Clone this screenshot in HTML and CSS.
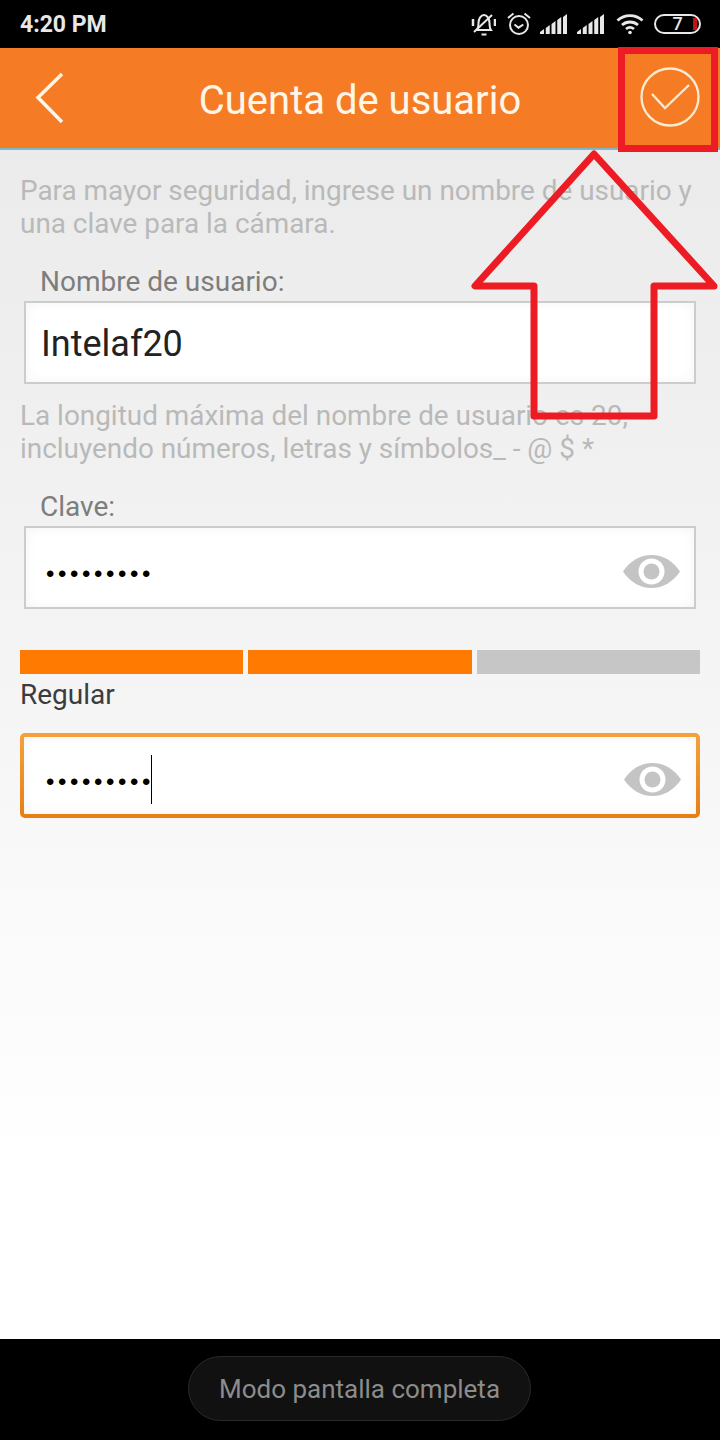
FILE: index.html
```html
<!DOCTYPE html>
<html lang="es">
<head>
    <meta charset="UTF-8">
    <meta name="viewport" content="width=device-width, initial-scale=1.0">
    <title>Cuenta de usuario</title>
    <link rel="stylesheet" href="styles.css">
</head>
<body>
    <div class="status-bar">
        <span class="clock">4:20 PM</span>
        <div class="status-icons">
            <!-- muted bell -->
            <svg class="ic-bell" width="26" height="24" viewBox="0 0 26 24" fill="none" stroke="#e8e8e8" stroke-width="2">
                <path d="M7 18c1.5-2 1.5-4 1.500-7 0-4.500 2.500-8 5.500-8s5.500 3.500 5.500 8c0 3 0 5 1.500 7z"/>
                <path d="M11.500 22.500h5"/>
                <path d="M22 3 4 20"/>
                <path d="M3 7v7M25 7v7" stroke-width="2.500"/>
            </svg>
            <!-- alarm -->
            <svg class="ic-alarm" width="24" height="24" viewBox="0 0 24 24" fill="none" stroke="#e8e8e8" stroke-width="2">
                <circle cx="12" cy="13" r="9"/>
                <path d="M7.500 12.500l4 3.200 4.800-3.200"/>
                <path d="M1 6l5.500-4.500M23 6l-5.500-4.500"/>
            </svg>
            <!-- signal -->
            <svg class="ic-signal" width="27" height="20" viewBox="0 0 27 20" fill="#e8e8e8">
                <path d="M0 20v-2l4-3v5zM5.750 20v-6l4-3v9zM11.500 20V10l4-3v13zM17.250 20V6l4-3v17zM23 20V3l4-3v20z"/>
            </svg>
            <svg class="ic-signal ic-signal-last" width="27" height="20" viewBox="0 0 27 20" fill="#e8e8e8">
                <path d="M0 20v-2l4-3v5zM5.750 20v-6l4-3v9zM11.500 20V10l4-3v13zM17.250 20V6l4-3v17zM23 20V3l4-3v20z"/>
            </svg>
            <!-- wifi -->
            <svg class="ic-wifi" width="28" height="22" viewBox="0 0 28 22" fill="none" stroke="#e8e8e8" stroke-width="2.800">
                <path d="M1.500 7.500c7-6.500 18-6.500 25 0"/>
                <path d="M6 12c4.500-4 11.500-4 16 0"/>
                <path d="M10 16c2.500-2 5.500-2 8 0"/>
                <circle cx="14" cy="19.500" r="1.800" fill="#e8e8e8" stroke="none"/>
            </svg>
            <!-- battery -->
            <div class="battery">
                <span class="battery-num">7</span>
                <span class="battery-level"></span>
            </div>
        </div>
    </div>

    <header class="header">
        <svg class="back" width="30" height="52" viewBox="0 0 30 52" fill="none" stroke="#fff5e8" stroke-width="3.500">
            <path d="M27 2 3 25.500 27 50"/>
        </svg>
        <h1 class="title">Cuenta de usuario</h1>
        <svg class="ok" width="60" height="60" viewBox="0 0 60 60" fill="none" stroke="#fde9d0" stroke-width="2.300">
            <circle cx="30" cy="30" r="28.500"/>
            <path d="M12 27 25 41 49 18"/>
        </svg>
    </header>

    <main class="content">
        <p class="hint hint-top">Para mayor seguridad, ingrese un nombre de usuario y una clave para la cámara.</p>

        <label class="label">Nombre de usuario:</label>
        <div class="field field-text">Intelaf20</div>

        <p class="hint hint-mid">La longitud máxima del nombre de usuario es 20, incluyendo números, letras y símbolos_ - @ $ *</p>

        <label class="label label-clave">Clave:</label>
        <div class="field">
            <span class="dots">•••••••••</span>
            <svg class="eye" width="57" height="33" viewBox="0 0 57 33">
                <path d="M0 16.500C7 6 17 0 28.500 0S50 6 57 16.500C50 27 40 33 28.500 33S7 27 0 16.500z" fill="#c4c4c4"/>
                <circle cx="28.500" cy="16.500" r="13" fill="#fff"/>
                <circle cx="28.500" cy="16.500" r="8" fill="#c4c4c4"/>
            </svg>
        </div>

        <div class="strength">
            <span class="seg seg-on"></span>
            <span class="seg seg-on"></span>
            <span class="seg"></span>
        </div>
        <p class="strength-text">Regular</p>

        <div class="field field-focus">
            <span class="dots">•••••••••</span><span class="caret"></span>
            <svg class="eye" width="57" height="33" viewBox="0 0 57 33">
                <path d="M0 16.500C7 6 17 0 28.500 0S50 6 57 16.500C50 27 40 33 28.500 33S7 27 0 16.500z" fill="#c4c4c4"/>
                <circle cx="28.500" cy="16.500" r="13" fill="#fff"/>
                <circle cx="28.500" cy="16.500" r="8" fill="#c4c4c4"/>
            </svg>
        </div>
    </main>

    <footer class="footer">
        <div class="pill">Modo pantalla completa</div>
    </footer>

    <!-- hand drawn annotation on top of the screenshot -->
    <div class="mark-box"></div>
    <svg class="mark-arrow" width="720" height="440" viewBox="0 0 720 440" fill="none" stroke="#ed1c24" stroke-width="7" stroke-linejoin="round">
        <path d="M594 14 475 146H534V276H654V146H714Z"/>
    </svg>
</body>
</html>
```
FILE: styles.css
```css
/* General */
body {
    margin: 0;
    width: 720px;
    height: 1440px;
    position: relative;
    display: flex;
    flex-direction: column;
    overflow: hidden;
    font-family: Roboto, "Liberation Sans", sans-serif;
    background-color: #000000;
}

/* Status bar */
.status-bar {
    height: 48px;
    flex: none;
    display: flex;
    align-items: center;
    justify-content: space-between;
    padding: 0 19px 0 20px;
    box-sizing: border-box;
    background-color: #000000;
    color: #e8e8e8;
}

.clock {
    font-size: 23px;
    font-weight: 700;
}

.status-icons {
    display: flex;
    align-items: center;
}

.ic-bell { margin-right: 11px; }
.ic-alarm { margin-right: 9px; }
.ic-signal { margin-right: 10px; }
.ic-signal-last { margin-right: 12px; }
.ic-wifi { margin-right: 10px; }

.battery {
    width: 47px;
    height: 20px;
    box-sizing: border-box;
    border: 2px solid #e8e8e8;
    border-radius: 10px;
    position: relative;
    display: flex;
    align-items: center;
    justify-content: center;
}

.battery-num {
    font-size: 18px;
    font-weight: 500;
    line-height: 16px;
}

.battery-level {
    position: absolute;
    right: 2px;
    top: 2px;
    width: 4px;
    height: 12px;
    background-color: #c0141a;
}

/* Header */
.header {
    height: 102px;
    flex: none;
    box-sizing: border-box;
    display: flex;
    align-items: center;
    position: relative;
    background-color: #f57c24;
    border-bottom: 2px solid #7fb6c9;
}

.back {
    position: absolute;
    left: 35px;
    top: 24px;
}

.title {
    margin: 0;
    width: 100%;
    padding-top: 4px;
    text-align: center;
    font-size: 40px;
    font-weight: 400;
    color: #fff5e8;
}

.ok {
    position: absolute;
    left: 640px;
    top: 19px;
}

/* Form */
.content {
    flex: 1;
    padding: 0 20px;
    background: linear-gradient(#ebebeb, #f4f4f4 42%, #ffffff 85%);
}

.hint {
    margin: 0;
    font-size: 27.9px;
    line-height: 33px;
    color: #b9b9b9;
}

.hint-top { margin-top: 24px; }
.hint-mid { margin-top: 15px; }

.label {
    display: block;
    margin-left: 20px;
    font-size: 28px;
    line-height: 30px;
    color: #7d7d7d;
    margin-top: 27px;
    margin-bottom: 4px;
}

.label-clave {
    margin-top: 27px;
}

.field {
    height: 83px;
    margin: 0 4px;
    box-sizing: border-box;
    display: flex;
    align-items: center;
    position: relative;
    padding-left: 15px;
    border: 2px solid #cccccc;
    background-color: #ffffff;
    box-shadow: inset 0 0 12px rgba(0, 0, 0, 0.05);
    font-size: 36px;
    color: #222222;
}

.field-text {
    padding-top: 2px;
}

.field-focus {
    height: 85px;
    margin: 0;
    padding-left: 22px;
    border: 4px solid transparent;
    border-radius: 5px;
    background: linear-gradient(#ffffff, #ffffff) padding-box, linear-gradient(#f4a23c, #e67e14) border-box;
}

.dots {
    margin-left: 5px;
    padding-top: 12px;
    font-family: "Liberation Sans", sans-serif;
    font-size: 24px;
    letter-spacing: 3.6px;
    color: #000000;
}

.field-focus .dots {
    margin-left: 0;
}

.caret {
    width: 1px;
    height: 49px;
    margin-left: -3px;
    margin-top: 8px;
    background-color: #000000;
}

.eye {
    position: absolute;
    right: 14px;
    top: 27px;
}

.field-focus .eye {
    right: 15px;
    top: 26px;
}

.strength {
    display: flex;
    gap: 5px;
    margin-top: 41px;
}

.seg {
    flex: 1;
    height: 24px;
    background-color: #c6c6c6;
}

.seg-on {
    background-color: #ff7a00;
}

.strength-text {
    margin: 5px 0 22px;
    font-size: 28px;
    line-height: 32px;
    color: #3c3c3c;
}

/* Bottom bar */
.footer {
    height: 101px;
    flex: none;
    display: flex;
    justify-content: center;
    background-color: #000000;
}

.pill {
    width: 343px;
    height: 65px;
    margin-top: 17px;
    margin-right: 1px;
    box-sizing: border-box;
    display: flex;
    align-items: center;
    justify-content: center;
    border: 1px solid #2a2a2a;
    border-radius: 33px;
    background-color: #111111;
    font-size: 26px;
    color: #8c8c8c;
}

/* Annotation */
.mark-box {
    position: absolute;
    left: 618px;
    top: 47px;
    width: 100px;
    height: 105px;
    box-sizing: border-box;
    border: 7px solid #ed1c24;
}

.mark-arrow {
    position: absolute;
    left: 0;
    top: 140px;
}
```
